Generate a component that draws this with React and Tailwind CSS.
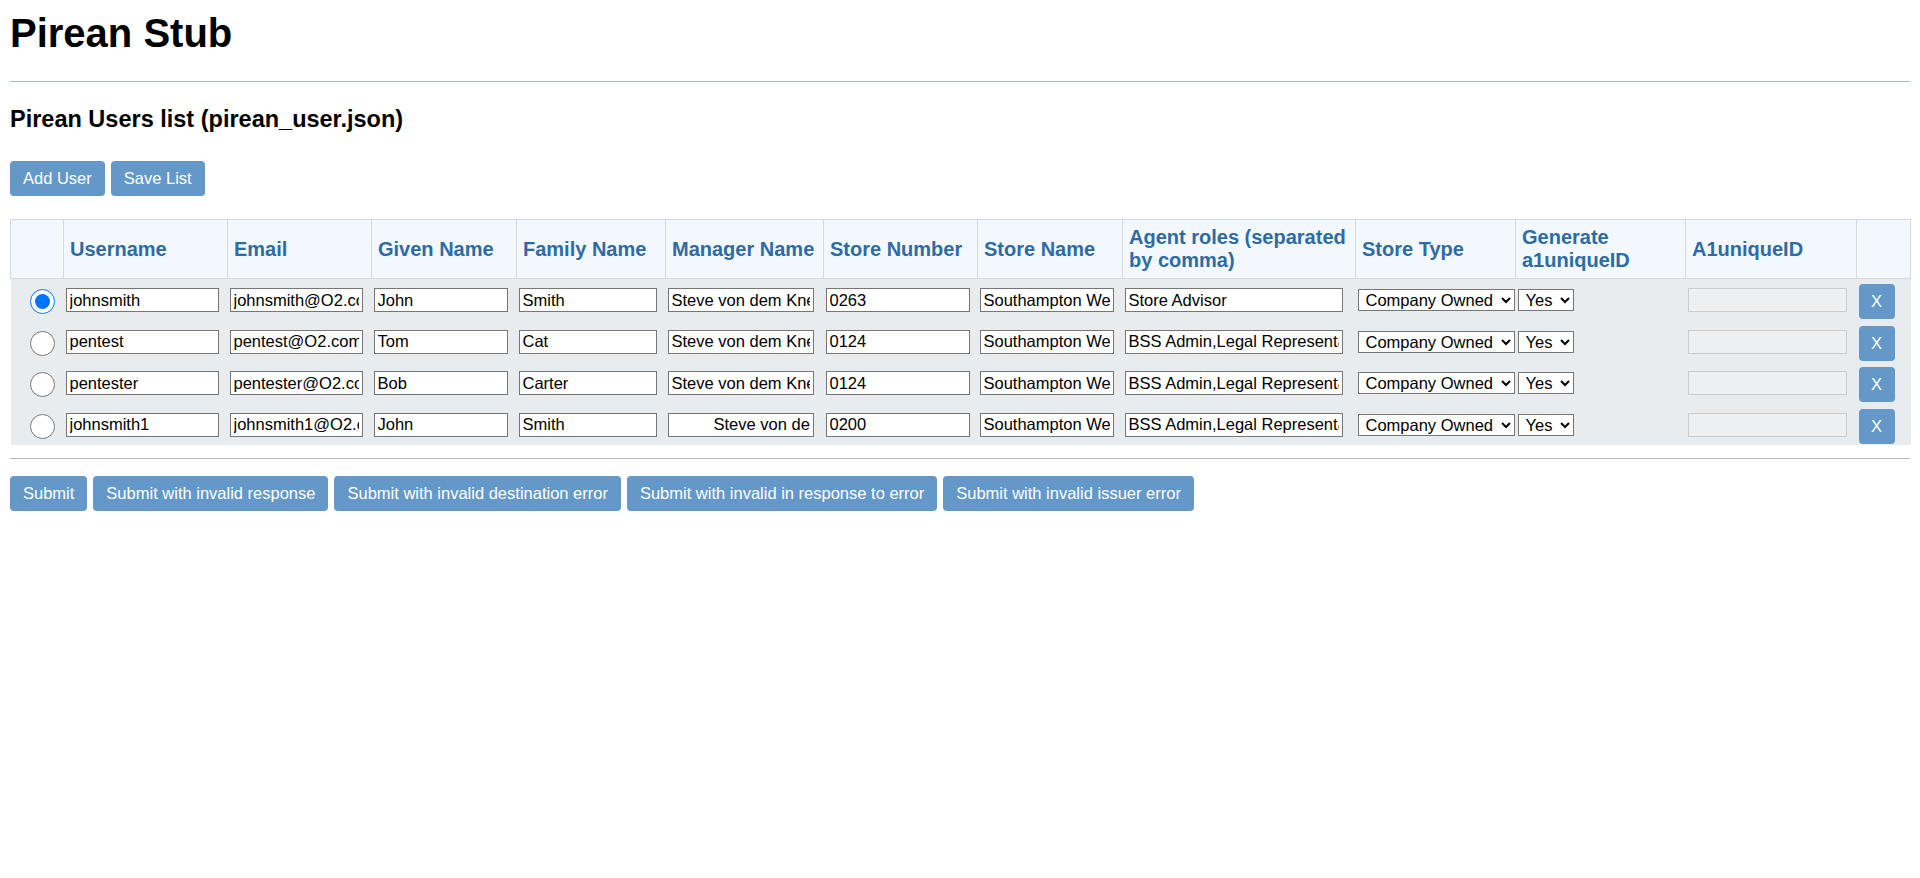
import React, { useState } from 'react';

const initialUsers = [
  {
    username: 'johnsmith',
    email: 'johnsmith@O2.com',
    givenName: 'John',
    familyName: 'Smith',
    managerName: 'Steve von dem Knees',
    storeNumber: '0263',
    storeName: 'Southampton West Quay',
    roles: 'Store Advisor',
  },
  {
    username: 'pentest',
    email: 'pentest@O2.com',
    givenName: 'Tom',
    familyName: 'Cat',
    managerName: 'Steve von dem Knees',
    storeNumber: '0124',
    storeName: 'Southampton West Quay',
    roles: 'BSS Admin,Legal Representative',
  },
  {
    username: 'pentester',
    email: 'pentester@O2.com',
    givenName: 'Bob',
    familyName: 'Carter',
    managerName: 'Steve von dem Knees',
    storeNumber: '0124',
    storeName: 'Southampton West Quay',
    roles: 'BSS Admin,Legal Representative',
  },
  {
    username: 'johnsmith1',
    email: 'johnsmith1@O2.com',
    givenName: 'John',
    familyName: 'Smith',
    managerName: 'Steve von dem Knees',
    storeNumber: '0200',
    storeName: 'Southampton West Quay',
    roles: 'BSS Admin,Legal Representative',
    indentManager: true,
  },
];

const btn = 'h-[35px] rounded-[4px] bg-[#6398c8] px-[13px] text-[16.5px] text-white';
const field = 'block h-[24px] border border-[#767676] bg-white px-[3px] text-[16.5px] text-black outline-none';
const picker = 'block h-[22px] border border-[#767676] bg-white pl-[3px] text-[16.5px] text-black outline-none';
const th = 'border border-[#d5d9dd] bg-[#f3f8fe] px-[6px] py-[6px] text-left align-middle text-[20px] font-bold leading-[23px] text-[#2d6ca2]';
// cells holding the radio / delete button set the row height
const td = 'pt-[5px] pb-[1.5px] pl-[2px] align-middle';
// text fields sit a touch higher than the button
const tdField = 'pt-[3px] pb-[2px] pl-[2px] align-middle';

const App = () => {
  const [users, setUsers] = useState(initialUsers);
  const [selected, setSelected] = useState(0);

  const update = (i, key, value) => {
    setUsers(users.map((u, idx) => (idx === i ? { ...u, [key]: value } : u)));
  };

  return (
    <div className="min-h-screen bg-white px-[10px] pt-[10px] font-['Liberation_Sans',Arial,sans-serif] text-black">
      <h1 className="text-[40px] font-bold leading-[46px]">Pirean Stub</h1>
      <hr className="mt-[25px] border-[#aab8c2]" />
      <h2 className="mt-[24px] text-[23.5px] font-bold leading-[27px]">Pirean Users list (pirean_user.json)</h2>

      <div className="mt-[28px] flex gap-[6px]">
        <button className={btn}>Add User</button>
        <button className={btn}>Save List</button>
      </div>

      <table className="mt-[23px] w-full table-fixed border-collapse">
        <colgroup>
          <col className="w-[53px]" />
          <col className="w-[164px]" />
          <col className="w-[144px]" />
          <col className="w-[145px]" />
          <col className="w-[149px]" />
          <col className="w-[158px]" />
          <col className="w-[154px]" />
          <col className="w-[145px]" />
          <col className="w-[233px]" />
          <col className="w-[160px]" />
          <col className="w-[170px]" />
          <col className="w-[171px]" />
          <col className="w-[54px]" />
        </colgroup>
        <thead>
          <tr>
            <th className={th}></th>
            <th className={th}>Username</th>
            <th className={th}>Email</th>
            <th className={th}>Given Name</th>
            <th className={th}>Family Name</th>
            <th className={th}>Manager Name</th>
            <th className={th}>Store Number</th>
            <th className={th}>Store Name</th>
            <th className={th}>Agent roles (separated by comma)</th>
            <th className={th}>Store Type</th>
            <th className={th}>Generate a1uniqueID</th>
            <th className={th}>A1uniqueID</th>
            <th className={th}></th>
          </tr>
        </thead>
        <tbody>
          {users.map((u, i) => (
            <tr key={i} className="bg-[#e9ecef]">
              <td className={td}>
                <input
                  type="radio"
                  name="selectedUser"
                  checked={selected === i}
                  onChange={() => setSelected(i)}
                  className="ml-[17px] block h-[25px] w-[25px]"
                />
              </td>
              <td className={tdField}>
                <input className={`${field} w-[153px]`} value={u.username} onChange={(e) => update(i, 'username', e.target.value)} />
              </td>
              <td className={tdField}>
                <input className={`${field} w-[133px]`} value={u.email} onChange={(e) => update(i, 'email', e.target.value)} />
              </td>
              <td className={tdField}>
                <input className={`${field} w-[134px]`} value={u.givenName} onChange={(e) => update(i, 'givenName', e.target.value)} />
              </td>
              <td className={tdField}>
                <input className={`${field} w-[138px]`} value={u.familyName} onChange={(e) => update(i, 'familyName', e.target.value)} />
              </td>
              <td className={tdField}>
                <input
                  className={`${field} w-[146px] ${u.indentManager ? 'pl-[45px]' : ''}`}
                  value={u.managerName}
                  onChange={(e) => update(i, 'managerName', e.target.value)}
                />
              </td>
              <td className={tdField}>
                <input className={`${field} w-[144px]`} value={u.storeNumber} onChange={(e) => update(i, 'storeNumber', e.target.value)} />
              </td>
              <td className={tdField}>
                <input className={`${field} w-[134px]`} value={u.storeName} onChange={(e) => update(i, 'storeName', e.target.value)} />
              </td>
              <td className={tdField}>
                <input className={`${field} w-[218px]`} value={u.roles} onChange={(e) => update(i, 'roles', e.target.value)} />
              </td>
              <td className={tdField}>
                <select className={`${picker} w-[157px]`} defaultValue="company">
                  <option value="company">Company Owned</option>
                  <option value="franchise">Franchise</option>
                </select>
              </td>
              <td className={tdField}>
                <select className={`${picker} w-[56px]`} defaultValue="yes">
                  <option value="yes">Yes</option>
                  <option value="no">No</option>
                </select>
              </td>
              <td className={tdField}>
                <input disabled className="block h-[24px] w-[159px] border border-[#c9cbcd] bg-[#eeeff0] px-[3px] text-[16.5px]" />
              </td>
              <td className={td}>
                <button
                  className="block h-[35px] w-[36px] rounded-[4px] bg-[#6398c8] text-[16.5px] text-white"
                  onClick={() => setUsers(users.filter((_, idx) => idx !== i))}
                >
                  X
                </button>
              </td>
            </tr>
          ))}
        </tbody>
      </table>

      <hr className="mt-[13px] border-[#b4bac0]" />

      <div className="mt-[17px] flex gap-[6px]">
        <button className={btn}>Submit</button>
        <button className={btn}>Submit with invalid response</button>
        <button className={btn}>Submit with invalid destination error</button>
        <button className={btn}>Submit with invalid in response to error</button>
        <button className={btn}>Submit with invalid issuer error</button>
      </div>
    </div>
  );
};

export default App;
